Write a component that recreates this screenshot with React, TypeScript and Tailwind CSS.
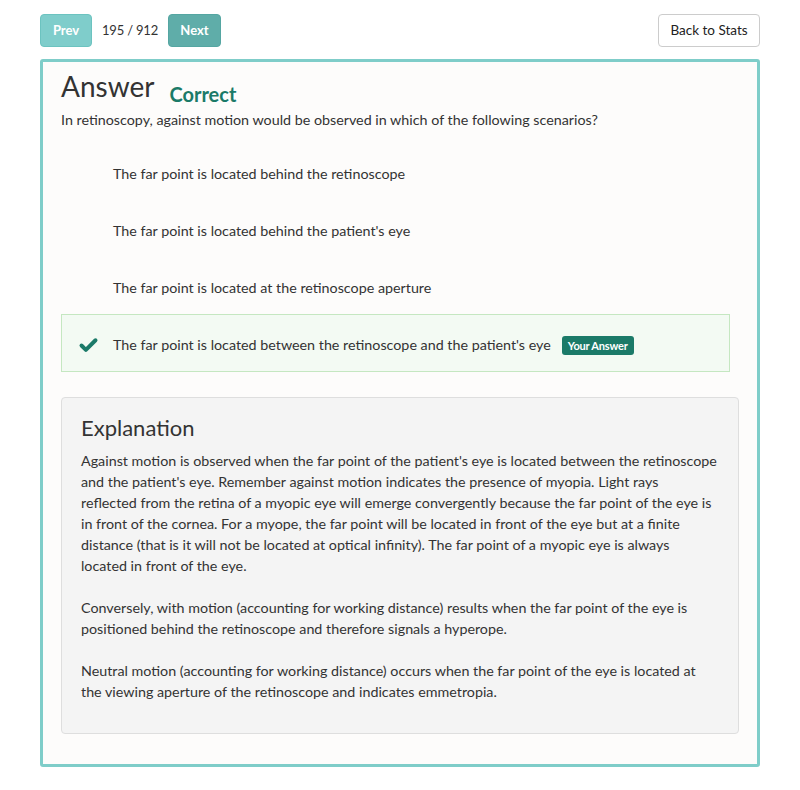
import { Check } from "lucide-react";

const options = [
  "The far point is located behind the retinoscope",
  "The far point is located behind the patient's eye",
  "The far point is located at the retinoscope aperture",
  "The far point is located between the retinoscope and the patient's eye",
];

const selected = 3;

// explanation kept line by line so it wraps like the original
const explanation = [
  [
    "Against motion is observed when the far point of the patient's eye is located between the retinoscope",
    "and the patient's eye. Remember against motion indicates the presence of myopia. Light rays",
    "reflected from the retina of a myopic eye will emerge convergently because the far point of the eye is",
    "in front of the cornea. For a myope, the far point will be located in front of the eye but at a finite",
    "distance (that is it will not be located at optical infinity). The far point of a myopic eye is always",
    "located in front of the eye.",
  ],
  [
    "Conversely, with motion (accounting for working distance) results when the far point of the eye is",
    "positioned behind the retinoscope and therefore signals a hyperope.",
  ],
  [
    "Neutral motion (accounting for working distance) occurs when the far point of the eye is located at",
    "the viewing aperture of the retinoscope and indicates emmetropia.",
  ],
];

export default function App() {
  return (
    <div className="min-h-[790px] bg-white px-10 pt-[14px] font-['Lato','Open_Sans',sans-serif] text-[#333]">
      <div className="flex items-center">
        <button className="h-[33px] w-[52px] rounded-[4px] border border-[#6cc3c0] bg-[#7fcdcb] text-[13px] font-bold text-white">
          Prev
        </button>
        <span className="mx-[10px] text-[13px] tracking-[-0.2px]">195 / 912</span>
        <button className="h-[33px] w-[53px] rounded-[4px] border border-[#55a6a2] bg-[#5fada9] text-[13px] font-bold text-white">
          Next
        </button>
        <button className="ml-auto h-[33px] w-[102px] rounded-[4px] border border-[#ccc] bg-white text-[13.5px] text-[#222]">
          Back to Stats
        </button>
      </div>

      <div className="mt-3 h-[708px] rounded-[3px] border-[3px] border-[#7fcdc9] bg-[#fdfcfb] px-[18px] pt-[5px]">
        <div className="flex items-end">
          <h1 className="text-[28px] leading-[39px] text-[#333]">Answer</h1>
          <span className="mb-[-4px] ml-[15px] text-[20px] font-bold leading-[32px] text-[#1b7a68]">
            Correct
          </span>
        </div>
        <p className="mt-[4px] text-[14.3px] leading-[20px]">
          In retinoscopy, against motion would be observed in which of the following scenarios?
        </p>

        <div className="mr-[9px] mt-[15px]">
          {options.map((o, i) => (
            <div
              key={i}
              className={
                i === selected
                  ? "-mt-[2px] flex h-[58px] items-center border border-[#c5e7c1] bg-[#f3faf3] pl-[16px] pt-[4px]"
                  : "flex h-[57px] items-center border border-transparent pl-[51px]"
              }
            >
              {i === selected && (
                <Check className="mr-[14px] h-[21px] w-[21px] text-[#1b7a68]" strokeWidth={4.5} />
              )}
              <span className="text-[14.3px]">{o}</span>
              {i === selected && (
                <span className="ml-[11px] rounded-[3px] bg-[#1b7a68] px-[6px] py-[3px] text-[11px] font-bold leading-[13px] tracking-[-0.2px] text-white">
                  Your Answer
                </span>
              )}
            </div>
          ))}
        </div>

        <div className="mt-[25px] rounded-[4px] border border-[#dedede] bg-[#f4f4f4] px-[19px] pb-[31px] pt-[15px]">
          <h2 className="text-[22px] leading-[30px] text-[#333]">Explanation</h2>
          <div className="mt-[7px] space-y-[21px] text-[14.3px] leading-[21px]">
            {explanation.map((para, i) => (
              <p key={i}>
                {para.map((line, j) => (
                  <span key={j} className="block whitespace-nowrap">
                    {line}
                  </span>
                ))}
              </p>
            ))}
          </div>
        </div>
      </div>
    </div>
  );
}
